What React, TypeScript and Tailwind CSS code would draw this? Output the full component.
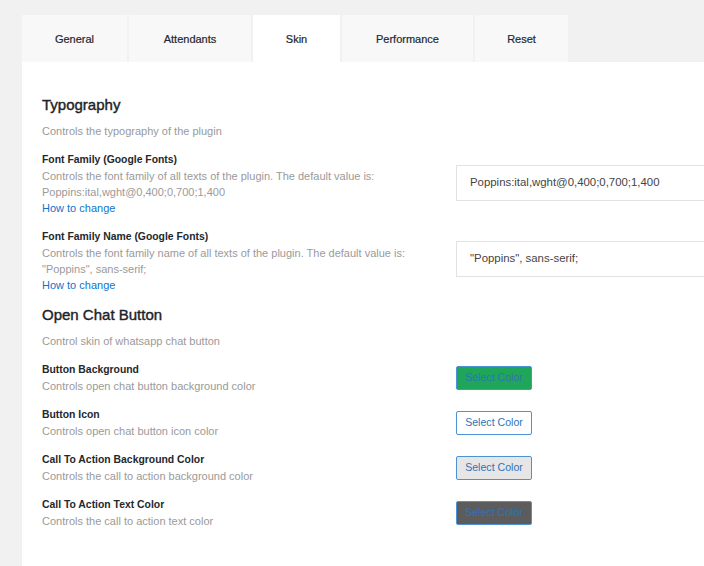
const tabs = ['General', 'Attendants', 'Skin', 'Performance', 'Reset'];
const tabWidths = ['w-[105px]', 'w-[122px]', 'w-[87px]', 'w-[131px]', 'w-[93px]'];

function TextField({
  label,
  desc,
  value,
  offset,
}: {
  label: string;
  desc: string[];
  value: string;
  offset: string;
}) {
  return (
    <div className="flex items-start">
      <div className="w-[414px] shrink-0">
        <div className="text-[10.4px] leading-4 font-bold text-[#23282d]">{label}</div>
        {desc.map((d) => (
          <div key={d} className="text-[11px] leading-4 text-[#9a9a9a]">
            {d}
          </div>
        ))}
        <a className="block text-[11px] leading-4 text-[#1273c9]">How to change</a>
      </div>
      <div
        className={`${offset} h-[36px] w-[260px] shrink-0 border border-[#e2e2e2] bg-white pl-[13px] flex items-center text-[11.4px] text-[#444]`}
      >
        {value}
      </div>
    </div>
  );
}

function ColorField({ label, desc, swatch }: { label: string; desc: string; swatch: string }) {
  return (
    <div className="flex items-start">
      <div className="w-[414px] shrink-0">
        <div className="text-[10.4px] leading-4 font-bold text-[#23282d]">{label}</div>
        <div className="text-[11px] leading-4 text-[#9a9a9a]">{desc}</div>
      </div>
      <button
        className={`mt-[4px] h-[24px] w-[76px] rounded-[2px] border border-[#4f92d3] text-[10.6px] text-[#2f73b8] ${swatch}`}
      >
        Select Color
      </button>
    </div>
  );
}

export default function App() {
  return (
    <div
      className="h-[566px] overflow-hidden bg-[#f1f1f1] pl-[22px] pt-[15px]"
      style={{ fontFamily: '"Liberation Sans", Arial, sans-serif' }}
    >
      <div className="flex gap-[2px]">
        {tabs.map((t, i) => (
          <div
            key={t}
            className={`h-[47px] ${tabWidths[i]} flex items-center justify-center pt-[2px] text-[11px] text-[#23282d] [-webkit-text-stroke:0.2px] ${
              t === 'Skin' ? 'bg-white' : 'bg-[#f8f8f8]'
            }`}
          >
            {t}
          </div>
        ))}
      </div>
      <div className="bg-white pl-[20px] pt-[33px] pb-[40px] overflow-hidden">
        <h2 className="text-[15px] leading-5 text-[#1d2327] [-webkit-text-stroke:0.4px]">Typography</h2>
        <p className="mt-[8px] text-[11px] leading-4 text-[#9a9a9a]">Controls the typography of the plugin</p>
        <div className="mt-[13px] flex flex-col gap-[13px]">
          <TextField
            label="Font Family (Google Fonts)"
            desc={[
              'Controls the font family of all texts of the plugin. The default value is:',
              'Poppins:ital,wght@0,400;0,700;1,400',
            ]}
            value="Poppins:ital,wght@0,400;0,700;1,400"
            offset="mt-[13px]"
          />
          <TextField
            label="Font Family Name (Google Fonts)"
            desc={[
              'Controls the font family name of all texts of the plugin. The default value is:',
              '"Poppins", sans-serif;',
            ]}
            value={'"Poppins", sans-serif;'}
            offset="mt-[12px]"
          />
        </div>
        <h2 className="mt-[12px] text-[15px] leading-5 text-[#1d2327] [-webkit-text-stroke:0.4px]">
          Open Chat Button
        </h2>
        <p className="mt-[8px] text-[11px] leading-4 text-[#9a9a9a]">Control skin of whatsapp chat button</p>
        <div className="mt-[13px] flex flex-col gap-[13px]">
          <ColorField
            label="Button Background"
            desc="Controls open chat button background color"
            swatch="bg-[#1fa65a]"
          />
          <ColorField label="Button Icon" desc="Controls open chat button icon color" swatch="bg-white" />
          <ColorField
            label="Call To Action Background Color"
            desc="Controls the call to action background color"
            swatch="bg-[#e6e6e6]"
          />
          <ColorField
            label="Call To Action Text Color"
            desc="Controls the call to action text color"
            swatch="bg-[#5c5c5c]"
          />
        </div>
      </div>
    </div>
  );
}
